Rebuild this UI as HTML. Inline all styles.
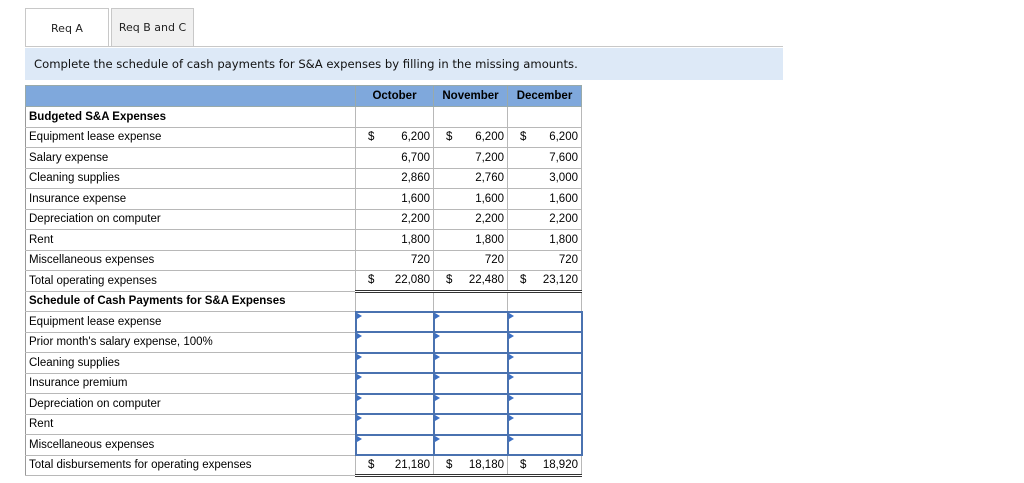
<!DOCTYPE html><html><head><style>
body{margin:0;width:1024px;height:483px;background:#fff;font-family:"DejaVu Sans","Liberation Sans",sans-serif;position:relative;overflow:hidden}
.tab{position:absolute;top:8px;height:39px;box-sizing:border-box;border:1px solid #c8c8c8;font-size:11px;display:flex;align-items:center;justify-content:center;color:#222}
.banner{position:absolute;left:25px;top:48px;width:758px;height:32px;background:#dde9f7;font-size:11.6px;line-height:32px;padding-left:9px;box-sizing:border-box;color:#111}
table{position:absolute;left:25px;top:85px;border-collapse:collapse;font-family:"Liberation Sans",Arial,sans-serif;font-size:11.5px;table-layout:fixed}
td{height:20.5px;padding:0 3px;border:1px solid #b8b8b8;box-sizing:border-box;white-space:nowrap;position:relative}
tr.h td{background:#7fa8dc;font-weight:bold;text-align:center;height:21px;border-color:#9aa}
td.n{text-align:right}
td.n span{position:absolute;left:12px}
td.b{font-weight:bold}
td.i{border:2px solid #4a72b0}
td.i:before{content:"";position:absolute;left:0;top:0;border-left:5px solid #3b6fc4;border-top:3px solid transparent;border-bottom:3px solid transparent}
tr.t td.n{border-bottom:3px double #333}
td:first-child{border-left:1px solid #999}
</style></head><body>
<div class="tab" style="left:25px;width:84px;background:#fff;border-bottom:none">Req A</div>
<div class="tab" style="left:111px;width:83px;background:#f0f0f0">Req B and C</div>
<div style="position:absolute;left:25px;top:46px;width:758px;height:1px;background:#c8c8c8"></div>
<div class="banner">Complete the schedule of cash payments for S&amp;A expenses by filling in the missing amounts.</div>
<table>
<col style="width:330px"><col style="width:78px"><col style="width:74px"><col style="width:74px">
<tr class="h"><td></td><td>October</td><td>November</td><td>December</td></tr>
<tr><td class="b">Budgeted S&amp;A Expenses</td><td></td><td></td><td></td></tr>
<tr><td>Equipment lease expense</td><td class="n"><span>$</span>6,200</td><td class="n"><span>$</span>6,200</td><td class="n"><span>$</span>6,200</td></tr>
<tr><td>Salary expense</td><td class="n">6,700</td><td class="n">7,200</td><td class="n">7,600</td></tr>
<tr><td>Cleaning supplies</td><td class="n">2,860</td><td class="n">2,760</td><td class="n">3,000</td></tr>
<tr><td>Insurance expense</td><td class="n">1,600</td><td class="n">1,600</td><td class="n">1,600</td></tr>
<tr><td>Depreciation on computer</td><td class="n">2,200</td><td class="n">2,200</td><td class="n">2,200</td></tr>
<tr><td>Rent</td><td class="n">1,800</td><td class="n">1,800</td><td class="n">1,800</td></tr>
<tr><td>Miscellaneous expenses</td><td class="n">720</td><td class="n">720</td><td class="n">720</td></tr>
<tr class="t"><td>Total operating expenses</td><td class="n" style="border-top:1px solid #333"><span>$</span>22,080</td><td class="n" style="border-top:1px solid #333"><span>$</span>22,480</td><td class="n" style="border-top:1px solid #333"><span>$</span>23,120</td></tr>
<tr><td class="b">Schedule of Cash Payments for S&amp;A Expenses</td><td></td><td></td><td></td></tr>
<tr><td>Equipment lease expense</td><td class="i"></td><td class="i"></td><td class="i"></td></tr>
<tr><td>Prior month's salary expense, 100%</td><td class="i"></td><td class="i"></td><td class="i"></td></tr>
<tr><td>Cleaning supplies</td><td class="i"></td><td class="i"></td><td class="i"></td></tr>
<tr><td>Insurance premium</td><td class="i"></td><td class="i"></td><td class="i"></td></tr>
<tr><td>Depreciation on computer</td><td class="i"></td><td class="i"></td><td class="i"></td></tr>
<tr><td>Rent</td><td class="i"></td><td class="i"></td><td class="i"></td></tr>
<tr><td>Miscellaneous expenses</td><td class="i"></td><td class="i"></td><td class="i"></td></tr>
<tr class="t"><td>Total disbursements for operating expenses</td><td class="n"><span>$</span>21,180</td><td class="n"><span>$</span>18,180</td><td class="n"><span>$</span>18,920</td></tr>
</table>
</body></html>
